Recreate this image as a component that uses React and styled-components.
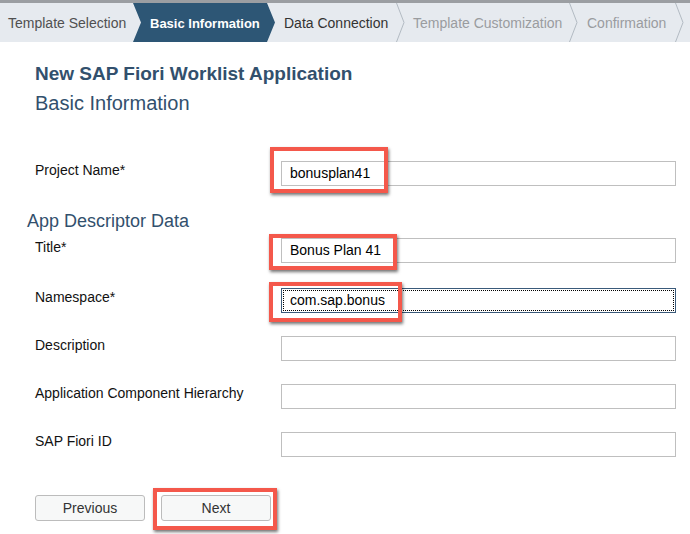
import React from 'react';
import styled, { createGlobalStyle } from 'styled-components';

const GlobalStyle = createGlobalStyle`
  body {
    margin: 0;
    background: #fff;
    font-family: "Liberation Sans", Arial, sans-serif;
  }
`

const Page = styled.div`
  width: 690px;
  height: 534px;
  overflow: hidden;
`

const TabBar = styled.div`
  display: flex;
  height: 39px;
  border-top: 3px solid #9b9ea2;
  background: #e6eaef;
`

const Step = styled.div`
  display: flex;
  align-items: center;
  flex: none;
  width: ${p => p.w}px;
  padding-left: ${p => p.pl}px;
  padding-top: 1px;
  box-sizing: border-box;
  font-size: 14px;
  white-space: nowrap;
  color: ${p => p.tone === 'done' ? '#505050' : p.tone === 'next' ? '#333' : '#9a9c9f'};
`

const ActiveStep = styled(Step)`
  background: #2d5675;
  color: #fff;
  font-weight: bold;
  font-size: 13px;
  clip-path: polygon(0 0, calc(100% - 8px) 0, 100% 50%, calc(100% - 8px) 100%, 0 100%, 8px 50%);
`

const Separator = () => (
  <svg width="9" height="39" viewBox="0 0 9 39" style={{ flex: 'none' }}>
    <polyline points="0.5,0 8,19.5 0.5,39" fill="none" stroke="#b3bac2" strokeWidth="1" />
  </svg>
)

const Content = styled.div`
  padding: 20px 0 0 35px;
`

const Title = styled.h1`
  margin: 0;
  font-size: 19px;
  line-height: 24px;
  font-weight: bold;
  color: #32506d;
`

const Subtitle = styled.h2`
  margin: 4px 0 0;
  font-size: 20px;
  line-height: 26px;
  font-weight: normal;
  color: #32506d;
`

const SectionTitle = styled.h3`
  margin: 24px 0 0 -8px;
  font-size: 18px;
  line-height: 22px;
  font-weight: normal;
  color: #32506d;
`

const Row = styled.div`
  display: grid;
  grid-template-columns: 246px 395px;
  align-items: start;
  margin-top: ${p => p.mt}px;
`

const Label = styled.div`
  font-size: 14px;
  line-height: 18px;
  color: #111;
`

const InputWrap = styled.div`
  position: relative;
  height: 25px;
`

const Input = styled.div`
  height: 25px;
  box-sizing: border-box;
  border: 1px solid ${p => p.focused ? '#3a5a7a' : '#bfbfbf'};
  outline: ${p => p.focused ? '1px dotted #000' : 'none'};
  outline-offset: -3px;
  padding-left: 8px;
  font-size: 14px;
  line-height: 23px;
  color: #000;
  background: #fff;
`

const Highlight = styled.div`
  position: absolute;
  left: ${p => p.x}px;
  top: ${p => p.y}px;
  width: ${p => p.w}px;
  height: ${p => p.h}px;
  box-sizing: border-box;
  border: 4px solid #f4584b;
  box-shadow: 1px 2px 3px rgba(0, 0, 0, 0.55);
  pointer-events: none;
`

const Buttons = styled.div`
  display: flex;
  gap: 16px;
  margin-top: 38px;
`

const ButtonWrap = styled.div`
  position: relative;
`

const Button = styled.div`
  width: 110px;
  height: 26px;
  box-sizing: border-box;
  border: 1px solid #bcbcbc;
  border-radius: 3px;
  background: #f7f8f8;
  display: flex;
  align-items: center;
  justify-content: center;
  font-size: 14px;
  color: #333;
`

const Field = ({ label, value, mt, focused, mark }) => (
  <Row mt={mt}>
    <Label>{label}</Label>
    <InputWrap>
      <Input focused={focused}>{value}</Input>
      {mark && <Highlight {...mark} />}
    </InputWrap>
  </Row>
)

const App = () => (
  <Page>
    <GlobalStyle />
    <TabBar>
      <Step w={133} pl={8} tone="done">Template Selection</Step>
      <ActiveStep w={142} pl={17}>Basic Information</ActiveStep>
      <Step w={121} pl={9} tone="next">Data Connection</Step>
      <Separator />
      <Step w={164} pl={8}>Template Customization</Step>
      <Separator />
      <Step w={97} pl={9}>Confirmation</Step>
      <Separator />
    </TabBar>
    <Content>
      <Title>New SAP Fiori Worklist Application</Title>
      <Subtitle>Basic Information</Subtitle>
      <Field label="Project Name*" value="bonusplan41" mt={45} mark={{ x: -11, y: -14, w: 118, h: 46 }} />
      <SectionTitle>App Descriptor Data</SectionTitle>
      <Field label="Title*" value="Bonus Plan 41" mt={6} mark={{ x: -12, y: -4, w: 128, h: 36 }} />
      <Field label="Namespace*" value="com.sap.bonus" mt={25} focused mark={{ x: -12, y: -6, w: 133, h: 40 }} />
      <Field label="Description" mt={23} />
      <Field label="Application Component Hierarchy" mt={23} />
      <Field label="SAP Fiori ID" mt={23} />
      <Buttons>
        <Button>Previous</Button>
        <ButtonWrap>
          <Button>Next</Button>
          <Highlight x={-8} y={-7} w={124} h={42} />
        </ButtonWrap>
      </Buttons>
    </Content>
  </Page>
);

export default App;
